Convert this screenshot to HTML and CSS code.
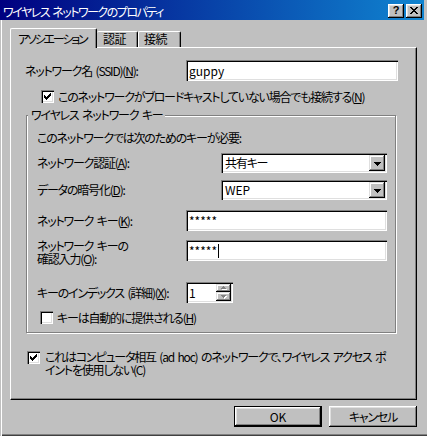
FILE: index.html
```html
<!DOCTYPE html>
<html lang="ja">
<head>
<meta charset="utf-8">
<title>ワイヤレス ネットワークのプロパティ</title>
<link rel="stylesheet" href="styles.css">
</head>
<body>
<div class="window">
  <div class="titlebar">
    <span class="title">ワイヤレス ネットワークのプロパティ</span>
    <div class="caption-buttons">
      <span class="cap-btn help">?</span>
      <span class="cap-btn close"><svg width="8" height="7" viewBox="0 0 8 7" shape-rendering="crispEdges"><path fill="#000" d="M0 0h2v1h-2z M6 0h2v1h-2z M1 1h2v1h-2z M5 1h2v1h-2z M2 2h4v1h-4z M3 3h2v1h-2z M2 4h4v1h-4z M1 5h2v1h-2z M5 5h2v1h-2z M0 6h2v1h-2z M6 6h2v1h-2z"/></svg></span>
    </div>
  </div>

  <div class="tabs">
    <div class="tab active">アソシエーション</div>
    <div class="tab t2">認証</div>
    <div class="tab t3">接続</div>
  </div>

  <div class="panel">
    <div class="row ssid-row">
      <span class="lbl lbl-ssid">ネットワーク名 (SSID)(<u>N</u>):</span>
      <div class="field ssid-field">guppy</div>
    </div>

    <div class="check-row cr-broadcast">
      <span class="checkbox"><svg width="7" height="7" viewBox="0 0 7 7" shape-rendering="crispEdges"><path fill="#000" d="M0 2h1v3h-1z M1 3h1v3h-1z M2 4h1v3h-1z M3 3h1v3h-1z M4 2h1v3h-1z M5 1h1v3h-1z M6 0h1v3h-1z"/></svg></span>
      <span class="check-text">このネットワークがブロードキャストしていない場合でも接続する(<u>N</u>)</span>
    </div>

    <div class="group">
      <div class="legend">ワイヤレス ネットワーク キー</div>
      <div class="note">このネットワークでは次のためのキーが必要:</div>

      <div class="row sel-row r-auth">
        <span class="lbl lbl-sel">ネットワーク認証(<u>A</u>):</span>
        <div class="select">
          <span class="sel-text">共有キー</span>
          <span class="drop-btn"><svg width="7" height="4" viewBox="0 0 7 4" shape-rendering="crispEdges"><path fill="#000" d="M0 0h7v1h-7z M1 1h5v1h-5z M2 2h3v1h-3z M3 3h1v1h-1z"/></svg></span>
        </div>
      </div>

      <div class="row sel-row r-enc">
        <span class="lbl lbl-sel">データの暗号化(<u>D</u>):</span>
        <div class="select">
          <span class="sel-text latin">WEP</span>
          <span class="drop-btn"><svg width="7" height="4" viewBox="0 0 7 4" shape-rendering="crispEdges"><path fill="#000" d="M0 0h7v1h-7z M1 1h5v1h-5z M2 2h3v1h-3z M3 3h1v1h-1z"/></svg></span>
        </div>
      </div>

      <div class="row in-row r-key">
        <span class="lbl lbl-in">ネットワーク キー(<u>K</u>):</span>
        <div class="field key-field">*****</div>
      </div>

      <div class="row in-row r-confirm">
        <span class="lbl lbl-in lbl-two">ネットワーク キーの
確認入力(O&#x332;):</span>
        <div class="field key-field">*****<span class="caret"></span></div>
      </div>

      <div class="row in-row r-index">
        <span class="lbl lbl-in">キーのインデックス (詳細)(<u>X</u>):</span>
        <div class="spin">
          <span class="spin-text">1</span>
          <span class="spin-btns">
            <span class="spin-btn up"><svg width="6" height="4" viewBox="0 0 6 4" shape-rendering="crispEdges"><path fill="#fff" d="M2 1h1v1h-1z M1 2h3v1h-3z M1 3h5v1h-5z"/><path fill="#808080" d="M2 0h1v1h-1z M1 1h3v1h-3z M0 2h5v1h-5z"/></svg></span>
            <span class="spin-btn down"><svg width="6" height="4" viewBox="0 0 6 4" shape-rendering="crispEdges"><path fill="#fff" d="M1 1h5v1h-5z M2 2h3v1h-3z M3 3h1v1h-1z"/><path fill="#808080" d="M0 0h5v1h-5z M1 1h3v1h-3z M2 2h1v1h-1z"/></svg></span>
          </span>
        </div>
      </div>

      <div class="check-row cr-auto">
        <span class="checkbox"></span>
        <span class="check-text">キーは自動的に提供される(<u>H</u>)</span>
      </div>
    </div>

    <div class="check-row cr-adhoc">
      <span class="checkbox"><svg width="7" height="7" viewBox="0 0 7 7" shape-rendering="crispEdges"><path fill="#000" d="M0 2h1v3h-1z M1 3h1v3h-1z M2 4h1v3h-1z M3 3h1v3h-1z M4 2h1v3h-1z M5 1h1v3h-1z M6 0h1v3h-1z"/></svg></span>
      <span class="check-text adhoc-text">これはコンピュータ相互 (ad hoc) のネットワークで、ワイヤレス アクセス ポ
イントを使用しない(C)</span>
    </div>
  </div>

  <div class="buttons">
    <div class="btn default"><span class="btn-face latin">OK</span></div>
    <div class="btn"><span class="btn-face">キャンセル</span></div>
  </div>
</div>
</body>
</html>
```

FILE: styles.css
```css
html, body {
  margin: 0;
  padding: 0;
  background: #c0c0c0;
}

body {
  font-family: "Noto Sans CJK JP", "Noto Sans", sans-serif;
  font-size: 12px;
  line-height: 12px;
  color: #000;
  font-feature-settings: "palt";
  letter-spacing: -1.2px;
  word-spacing: 2px;
}

.latin {
  letter-spacing: 0;
}

u {
  text-decoration: underline;
  text-underline-offset: 1px;
}

.window {
  width: 427px;
  height: 436px;
  box-sizing: border-box;
  background: #c0c0c0;
  overflow: hidden;
  box-shadow: inset 1px 0 0 #c0c0c0, inset 2px 0 0 #fff,
              inset 0 -1px 0 #404040, inset 0 -2px 0 #808080;
}

/* Title bar */
.titlebar {
  width: 424px;
  height: 20px;
  background: linear-gradient(to right, #000080, #1084d0);
  display: flex;
  justify-content: space-between;
  align-items: flex-start;
  color: #fff;
}

.title {
  margin: 6px 0 0 3px;
  white-space: nowrap;
  letter-spacing: -1.5px;
}

.caption-buttons {
  display: flex;
  gap: 2px;
  margin: 4px 2px 0 0;
}

.cap-btn {
  width: 16px;
  height: 14px;
  box-sizing: border-box;
  background: #c0c0c0;
  box-shadow: inset -1px -1px 0 #000, inset 1px 1px 0 #fff,
              inset -2px -2px 0 #808080, inset 2px 2px 0 #dfdfdf;
  display: flex;
  align-items: center;
  justify-content: center;
  color: #000;
}

.help {
  font-family: "Liberation Sans", sans-serif;
  font-weight: bold;
  font-size: 11px;
  line-height: 11px;
  letter-spacing: 0;
  padding: 0 0 1px 0;
}

.close svg {
  display: block;
  margin: 0 1px 1px 0;
}

/* Tabs */
.tabs {
  display: flex;
  align-items: flex-end;
  height: 19px;
  margin: 8px 0 0 10px;
}

.tab {
  box-sizing: border-box;
  height: 16px;
  background: #c0c0c0;
  border-top: 1px solid #fff;
  border-left: 1px solid #fff;
  border-right: 1px solid #000;
  box-shadow: inset -1px 0 0 #808080;
  border-radius: 2px 2px 0 0;
  padding-top: 1px;
  white-space: nowrap;
  overflow: hidden;
}

.tab.active {
  position: relative;
  z-index: 1;
  width: 87px;
  height: 20px;
  margin-bottom: -1px;
  padding: 4px 0 0 7px;
  letter-spacing: -2.2px;
}

.tab.t2 {
  width: 41px;
  border-left: none;
  padding-left: 6px;
  letter-spacing: -0.5px;
}

.tab.t3 {
  width: 43px;
  padding-left: 5px;
  letter-spacing: -0.5px;
}

/* Panel */
.panel {
  margin-left: 10px;
  width: 407px;
  height: 353px;
  box-sizing: border-box;
  border-top: 1px solid #fff;
  border-left: 1px solid #fff;
  border-right: 1px solid #000;
  border-bottom: 1px solid #000;
  box-shadow: inset -1px -1px 0 #808080;
  padding: 12px 0 0 14px;
}

.row {
  display: flex;
  align-items: center;
}

.lbl {
  white-space: nowrap;
  flex: none;
}

.lbl-ssid { width: 161px; }
.lbl-sel { width: 184px; }
.lbl-in { width: 149px; }

.ssid-row { height: 21px; }

.field {
  box-sizing: border-box;
  height: 21px;
  background: #fff;
  box-shadow: inset 1px 1px 0 #808080, inset 2px 2px 0 #000,
              inset -1px -1px 0 #fff, inset -2px -2px 0 #dfdfdf;
  padding: 0 0 0 3px;
  display: flex;
  align-items: center;
  white-space: nowrap;
  letter-spacing: 0;
}

.ssid-field { width: 212px; }
.key-field { width: 201px; }

.caret {
  display: inline-block;
  width: 1px;
  height: 14px;
  background: #000;
  margin-left: 1px;
}

/* Checkboxes */
.check-row {
  display: flex;
  align-items: center;
}

.checkbox {
  flex: none;
  width: 13px;
  height: 13px;
  box-sizing: border-box;
  background: #fff;
  box-shadow: inset 1px 1px 0 #808080, inset 2px 2px 0 #000,
              inset -1px -1px 0 #fff, inset -2px -2px 0 #dfdfdf;
  display: flex;
  align-items: center;
  justify-content: center;
}

.checkbox svg { display: block; }

.check-text {
  white-space: nowrap;
  line-height: 13px;
}

.cr-broadcast {
  height: 13px;
  margin: 9px 0 0 16px;
  gap: 4px;
}

/* Group box */
.group {
  box-sizing: border-box;
  width: 370px;
  height: 218px;
  margin: 12px 0 0 1px;
  border: 1px solid #808080;
  box-shadow: 1px 1px 0 #fff, inset 1px 1px 0 #fff;
  padding-left: 10px;
}

.legend {
  width: fit-content;
  margin: -7px 0 0 -9px;
  padding: 0 3px;
  background: #c0c0c0;
  white-space: nowrap;
}

.note {
  margin-top: 11px;
  white-space: nowrap;
}

.sel-row { height: 20px; }
.r-auth { margin-top: 9px; }
.r-enc { margin-top: 7px; }

.select {
  box-sizing: border-box;
  width: 166px;
  height: 20px;
  background: #fff;
  box-shadow: inset 1px 1px 0 #808080, inset 2px 2px 0 #000,
              inset -1px -1px 0 #fff, inset -2px -2px 0 #dfdfdf;
  padding: 2px;
  display: flex;
  align-items: center;
}

.sel-text {
  flex: 1;
  padding-left: 2px;
  white-space: nowrap;
}

.drop-btn {
  flex: none;
  width: 16px;
  height: 16px;
  box-sizing: border-box;
  background: #c0c0c0;
  box-shadow: inset -1px -1px 0 #000, inset 1px 1px 0 #dfdfdf,
              inset -2px -2px 0 #808080, inset 2px 2px 0 #fff;
  display: flex;
  align-items: center;
  justify-content: center;
}

.drop-btn svg { display: block; margin-top: 1px; }

.in-row { height: 21px; }
.r-key { margin-top: 10px; }
.r-confirm {
  margin-top: 9px;
  align-items: flex-start;
}
.lbl-two {
  white-space: pre-line;
  line-height: 13px;
  margin-top: -1px;
}
.r-index { margin-top: 21px; }

.spin {
  box-sizing: border-box;
  width: 47px;
  height: 21px;
  background: #fff;
  box-shadow: inset 1px 1px 0 #808080, inset 2px 2px 0 #000,
              inset -1px -1px 0 #fff, inset -2px -2px 0 #dfdfdf;
  padding: 2px;
  display: flex;
  letter-spacing: 0;
}

.spin-text {
  flex: 1;
  padding-left: 1px;
  display: flex;
  align-items: center;
}

.spin-btns {
  flex: none;
  width: 15px;
  display: flex;
  flex-direction: column;
}

.spin-btn {
  box-sizing: border-box;
  background: #c0c0c0;
  box-shadow: inset -1px -1px 0 #000, inset 1px 1px 0 #dfdfdf,
              inset -2px -2px 0 #808080, inset 2px 2px 0 #fff;
  display: flex;
  align-items: center;
  justify-content: center;
}

.spin-btn.up { height: 8px; }
.spin-btn.down { height: 9px; }
.spin-btn svg { display: block; }

.cr-auto {
  height: 13px;
  margin: 8px 0 0 3px;
  gap: 4px;
}

.cr-adhoc {
  margin: 18px 0 0 2px;
  align-items: flex-start;
  gap: 5px;
}

.adhoc-text {
  white-space: pre;
  margin-top: -1px;
}

/* Buttons */
.buttons {
  width: 417px;
  display: flex;
  justify-content: flex-end;
  gap: 7px;
  margin-top: 6px;
}

.btn {
  box-sizing: border-box;
  width: 88px;
  height: 21px;
  background: #c0c0c0;
  box-shadow: inset -1px -1px 0 #000, inset 1px 1px 0 #fff,
              inset -2px -2px 0 #808080, inset 2px 2px 0 #dfdfdf;
  display: flex;
}

.btn.default {
  border: 1px solid #000;
  box-shadow: none;
}

.btn-face {
  flex: 1;
  display: flex;
  align-items: center;
  justify-content: center;
  white-space: nowrap;
}

.btn.default .btn-face {
  box-shadow: inset -1px -1px 0 #000, inset 1px 1px 0 #fff,
              inset -2px -2px 0 #808080, inset 2px 2px 0 #dfdfdf;
}
```
